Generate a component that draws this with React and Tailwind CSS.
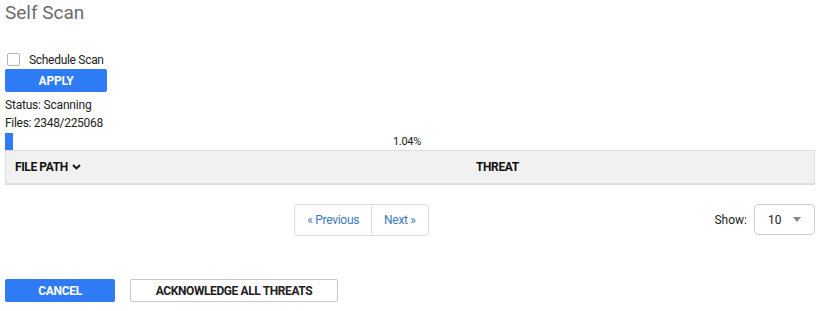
import React from "react";

export default function App() {
  return (
    <div className="w-[821px] h-[311px] bg-white px-[5px] text-[12px] text-[#222] font-['Roboto',sans-serif] leading-none">
      <h1 className="pt-[3px] text-[19px] leading-[20px] text-[#6b6b6b] font-normal">Self Scan</h1>

      <label className="mt-[30px] flex items-center gap-[9px] pl-[2px]">
        <span className="w-[13px] h-[13px] rounded-[2px] border border-[#b5b5b5] bg-white" />
        <span className="tracking-[-0.3px]">Schedule Scan</span>
      </label>

      <button className="mt-[3px] w-[102px] h-[23px] rounded-[2px] bg-[#2f7bf5] text-white font-bold text-[12px] tracking-[-0.2px]">
        APPLY
      </button>

      <div className="mt-[7px] tracking-[-0.2px]">Status: Scanning</div>
      <div className="mt-[6px] tracking-[-0.3px]">Files: 2348/225068</div>

      <div className="relative mt-[4px] h-[17px] w-[810px]">
        <div className="h-full bg-[#2f7bf5]" style={{ width: "8px" }} />
        <div className="absolute inset-0 flex items-center justify-center pr-[6px] text-[11px] tracking-[-0.3px]">1.04%</div>
      </div>

      <div className="flex h-[35px] w-[810px] items-center border border-b-2 border-[#dcdcdc] bg-[#f1f1f1] font-bold text-[12px] text-[#111] tracking-[-0.4px]">
        <div className="flex w-[470px] items-center gap-[4px] pl-[9px]">
          FILE PATH
          <svg width="9" height="6" viewBox="0 0 9 6" fill="none">
            <path d="M1 1l3.5 3.5L8 1" stroke="#111" strokeWidth="1.8" />
          </svg>
        </div>
        <div>THREAT</div>
      </div>

      <div className="relative mt-[19px] flex h-[32px] w-[810px] items-center justify-center">
        <div className="ml-[-97px] flex h-[32px] rounded-[4px] border border-[#dcdcdc] text-[#3a78c0] tracking-[-0.3px]">
          <span className="flex items-center px-[12px] border-r border-[#dcdcdc]">« Previous</span>
          <span className="flex items-center px-[12px]">Next »</span>
        </div>
        <div className="absolute right-0 top-0 flex items-center gap-[7px]">
          <span>Show:</span>
          <div className="flex h-[31px] w-[61px] items-center justify-between rounded-[4px] border border-[#cfcfcf] px-[13px]">
            <span>10</span>
            <svg width="8" height="5" viewBox="0 0 8 5"><path d="M0 0h8L4 5z" fill="#888" /></svg>
          </div>
        </div>
      </div>

      <div className="mt-[43px] flex gap-[15px]">
        <button className="w-[110px] h-[23px] rounded-[2px] bg-[#2f7bf5] text-white font-bold text-[12px] tracking-[-0.3px]">CANCEL</button>
        <button className="w-[208px] h-[23px] rounded-[2px] border border-[#c8c8c8] bg-white text-[#222] font-bold text-[12px] tracking-[-0.4px]">ACKNOWLEDGE ALL THREATS</button>
      </div>
    </div>
  );
}
